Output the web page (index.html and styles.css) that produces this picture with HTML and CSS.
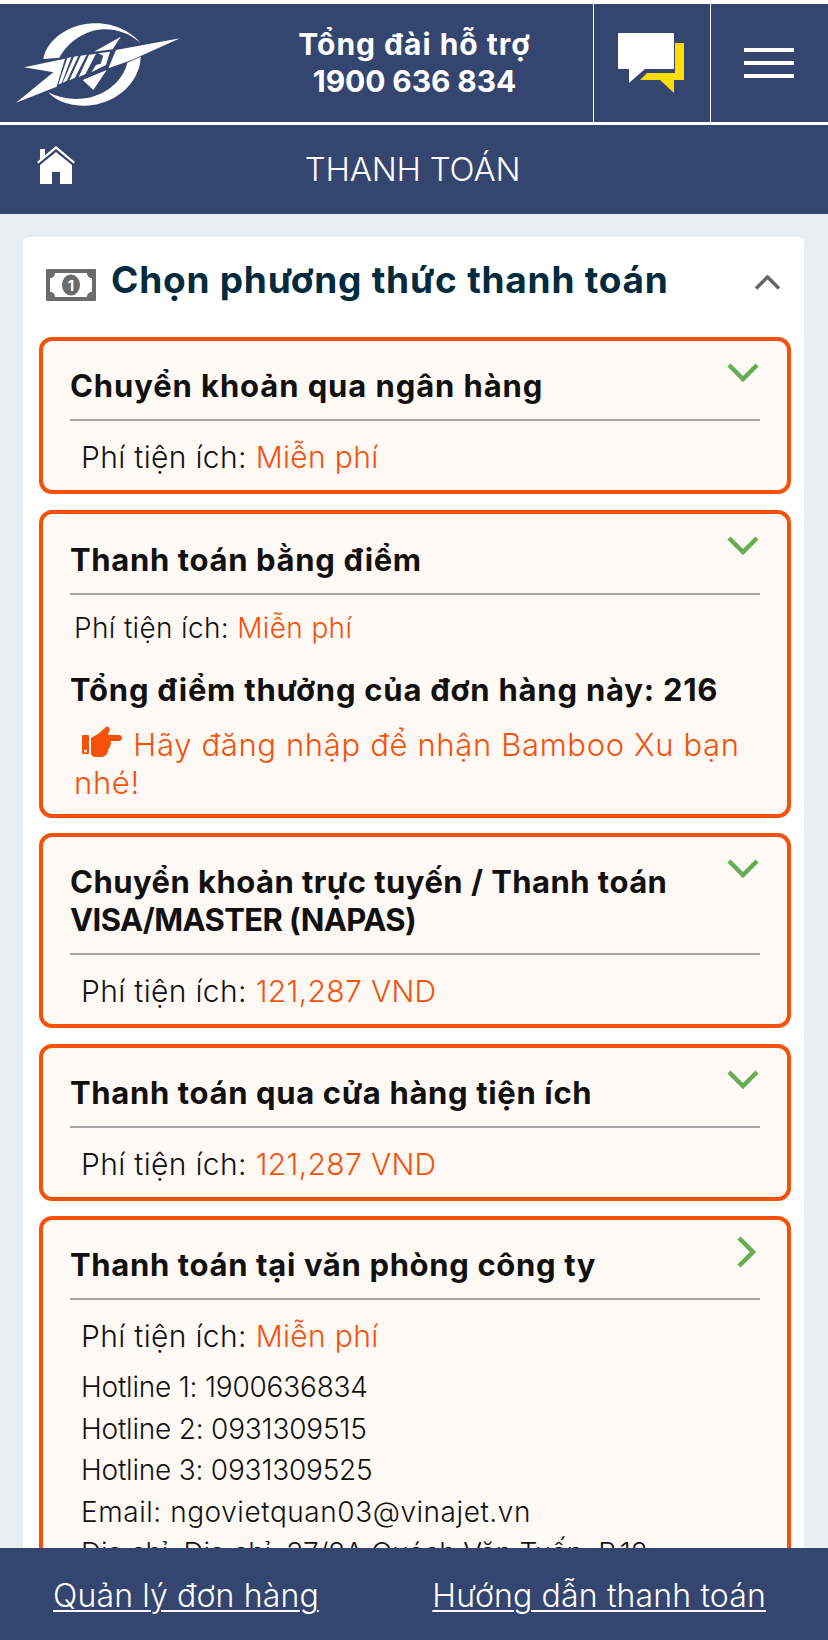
FILE: index.html
```html
<!DOCTYPE html>
<html lang="vi">
<head>
<meta charset="utf-8">
<title>Thanh toán</title>
<link rel="stylesheet" href="styles.css">
</head>
<body>
<header class="topbar">
  <a class="logo" href="#" aria-label="Logo">
    <svg width="180" height="95" viewBox="0 0 540 285">
      <path class="w" d="M100 132C108 85 160 30 250 25 310 22 365 50 392 85 360 55 320 42 280 43 225 46 175 80 148 128z"/>
      <path class="w" d="M352 143 392 125C392 190 330 268 225 272 175 274 135 255 115 232 150 250 190 256 225 250 290 240 340 195 352 143z"/>
      <path class="w" d="M42 157 165 131 140 215 18 263 130 172z"/>
      <path class="w" d="M172 129 184 127 155 205 145 208z"/>
      <path class="w" d="M192 125 205 123 170 198 158 203z"/>
      <path class="w" d="M212 122 230 119 195 188 178 196z"/>
      <path class="w" d="M237 119 258 116 226 178 206 186z"/>
      <path class="w" d="M265 115 300 110 288 150 244 172 258 150 272 146 280 122z"/>
      <path class="w" d="M332 65 252 110 308 103z"/>
      <path class="w" d="M510 70 318 105 295 160 365 135z"/>
      <path class="w" d="M218 195 290 165 250 225z"/>
    </svg>
  </a>
  <div class="hotline">Tổng đài hỗ trợ<br><span class="phone">1900 636 834</span></div>
  <a class="cell chat" href="#" aria-label="Chat">
    <svg width="66" height="60" viewBox="0 0 66 60">
      <path class="yellow" d="M57 10h9v37H56v13L42 47H22l7-7h28z"/>
      <path class="w" d="M1 0h54a1 1 0 0 1 1 1v34a1 1 0 0 1-1 1H27L11 50V36H1a1 1 0 0 1-1-1V1a1 1 0 0 1 1-1z"/>
    </svg>
  </a>
  <a class="cell menu" href="#" aria-label="Menu">
    <span class="burger"><i></i><i></i><i></i></span>
  </a>
</header>
<div class="subbar">
  <a class="home" href="#" aria-label="Trang chủ">
    <svg width="38" height="38" viewBox="0 0 38 38">
      <path class="w" d="M19 0 38 16l-1.500 1.500L19 3 1.500 17.500 0 16l3-2.500V3h5v6.300z"/>
      <path class="w" d="M19 6 35 19v19H23V26h-8v12H3V19z"/>
    </svg>
  </a>
  <h1>THANH TOÁN</h1>
</div>
<main class="page">
  <section class="card">
    <div class="card-head">
      <svg width="50" height="32" viewBox="0 0 50 32">
        <path class="gray" fill-rule="evenodd" d="M1 0h48a1 1 0 0 1 1 1v30a1 1 0 0 1-1 1H1a1 1 0 0 1-1-1V1a1 1 0 0 1 1-1zM9 4c0 3-2 5-5 5v14c3 0 5 2 5 5h32c0-3 2-5 5-5V9c-3 0-5-2-5-5z"/>
        <ellipse class="gray" cx="25" cy="16" rx="9" ry="10.500"/>
        <text class="money" x="25" y="22">1</text>
      </svg>
      <h2>Chọn phương thức thanh toán</h2>
      <svg class="collapse" width="27" height="15" viewBox="0 0 27 15"><path d="M2 13.500 13.500 2 25 13.500"/></svg>
    </div>

    <article class="box">
      <svg class="chev" width="32" height="20" viewBox="0 0 32 20"><path d="M2 2l14 14L30 2"/></svg>
      <h3 class="wide">Chuyển khoản qua ngân hàng</h3>
      <p class="fee">Phí tiện ích: <span class="hl">Miễn phí</span></p>
    </article>

    <article class="box points-box">
      <svg class="chev" width="32" height="20" viewBox="0 0 32 20"><path d="M2 2l14 14L30 2"/></svg>
      <h3>Thanh toán bằng điểm</h3>
      <p class="fee small">Phí tiện ích: <span class="hl">Miễn phí</span></p>
      <p class="points">Tổng điểm thưởng của đơn hàng này: 216</p>
      <p class="note">
        <svg class="hand" width="42" height="32" viewBox="0 0 42 32">
          <path fill-rule="evenodd" d="M1 9h5a1 1 0 0 1 1 1v17a1 1 0 0 1-1 1H1a1 1 0 0 1-1-1V10a1 1 0 0 1 1-1zM3.500 23.500a1.500 1.500 0 1 0 0 3 1.500 1.500 0 0 0 0-3z"/>
          <path d="M9 12l7-4 8-7c3-1 5 2 3 5l-1 3h11c4 0 4 6 0 6h-8c0 3-1 7-3 9 0 4-3 7-7 7h-6c-2 0-4-2-4-3z"/>
        </svg>
        Hãy đăng nhập để nhận Bamboo Xu bạn nhé!
      </p>
    </article>

    <article class="box">
      <svg class="chev" width="32" height="20" viewBox="0 0 32 20"><path d="M2 2l14 14L30 2"/></svg>
      <h3 class="tight">Chuyển khoản trực tuyến / Thanh toán <span class="caps">VISA/MASTER (NAPAS)</span></h3>
      <p class="fee">Phí tiện ích: <span class="hl">121,287 VND</span></p>
    </article>

    <article class="box store-box">
      <svg class="chev" width="32" height="20" viewBox="0 0 32 20"><path d="M2 2l14 14L30 2"/></svg>
      <h3>Thanh toán qua cửa hàng tiện ích</h3>
      <p class="fee">Phí tiện ích: <span class="hl">121,287 VND</span></p>
    </article>

    <article class="box">
      <svg class="chev right" width="20" height="32" viewBox="0 0 20 32"><path d="M2 2l14 14L2 30"/></svg>
      <h3>Thanh toán tại văn phòng công ty</h3>
      <p class="fee">Phí tiện ích: <span class="hl">Miễn phí</span></p>
      <ul class="contacts">
        <li>Hotline 1: 1900636834</li>
        <li>Hotline 2: 0931309515</li>
        <li>Hotline 3: 0931309525</li>
        <li class="email">Email: ngovietquan03@vinajet.vn</li>
        <li>Địa chỉ: Địa chỉ: 37/8A Quách Văn Tuấn, P.12</li>
      </ul>
    </article>
  </section>
</main>
<footer class="footer">
  <a href="#">Quản lý đơn hàng</a>
  <a href="#">Hướng dẫn thanh toán</a>
</footer>
</body>
</html>
```
FILE: styles.css
```css
* { box-sizing: border-box; }
html, body { margin: 0; padding: 0; height: 1640px; overflow: hidden; background: #fff; }
body { font-family: Inter, "Noto Sans", sans-serif; color: #111; padding-top: 4px; }
h1, h2, h3, p, ul { margin: 0; padding: 0; }
a { color: inherit; text-decoration: none; }
svg { display: block; }
.w { fill: #fff; }
.yellow { fill: #ffdd00; }
.gray { fill: #6b6b6b; }

.topbar { display: flex; height: 118px; background: #34466f; color: #fff; }
.logo { width: 236px; flex: none; padding: 11px 0 0 10px; }
.hotline { width: 357px; flex: none; text-align: center; font-size: 30px; line-height: 37px; font-weight: 700; padding-top: 22px; letter-spacing: 1px; }
.phone { letter-spacing: -0.1px; }
.cell { display: flex; align-items: center; justify-content: center; flex: none; border-left: 1px solid #fff; }
.chat { width: 117px; padding-right: 2px; }
.menu { width: 118px; padding-right: 2px; }
.burger { display: flex; flex-direction: column; gap: 9px; width: 50px; }
.burger i { display: block; height: 4px; background: #fff; }

.subbar { position: relative; display: flex; align-items: center; justify-content: center; height: 92px; background: #34466f; border-top: 3px solid #fff; }
.home { position: absolute; left: 37px; top: 21px; }
.subbar h1 { font-size: 33px; font-weight: 300; color: #fff; line-height: 1; letter-spacing: -0.2px; padding-right: 3px; }

.page { background: #e9eff0; padding: 23px 24px 0 23px; height: 1426px; overflow: hidden; }
.card { background: #fff; border-radius: 6px; padding: 0 13px 0 16px; height: 1500px; }
.card-head { position: relative; display: flex; align-items: center; height: 100px; padding: 0 0 4px 7px; }
.card-head h2 { margin: -10px 0 0 15px; font-size: 37px; line-height: 44px; font-weight: 700; color: #022b3d; white-space: nowrap; letter-spacing: 0.77px; }
.money { fill: #fff; font-size: 15px; font-weight: 700; text-anchor: middle; }
.collapse { position: absolute; right: 10px; top: 38px; }
.collapse path { fill: none; stroke: #666; stroke-width: 3.500; }

.box { position: relative; background: #fff9f5; border: 4px solid #f4510b; border-radius: 13px; padding: 26px 27px 13px; margin-bottom: 16px; }
.points-box, .store-box { margin-bottom: 15px; }
.box h3 { font-size: 31px; line-height: 38px; font-weight: 700; color: #111; padding-bottom: 14px; border-bottom: 2px solid #a5a5a5; letter-spacing: 0.65px; }
.box h3.wide { letter-spacing: 0.9px; }
.box h3.tight { letter-spacing: 0.46px; }
.box .caps { letter-spacing: -0.6px; }
.points-box h3 { padding-top: 1px; }
.chev { position: absolute; right: 28px; top: 22px; }
.chev path { fill: none; stroke: #66ad56; stroke-width: 4.500; }
.chev.right { right: 30px; top: 16px; }
.fee { font-size: 30px; line-height: 40px; font-weight: 300; padding: 16px 0 0 11px; letter-spacing: 0.35px; }
.fee.small { font-size: 28px; padding: 13px 0 0 4px; }
.hl { color: #f4510b; }
.points { font-size: 31px; line-height: 38px; font-weight: 700; padding-top: 23px; letter-spacing: 0.77px; }
.note { font-size: 31px; line-height: 37.500px; font-weight: 300; color: #f4510b; padding: 17px 0 0 4px; letter-spacing: 0.65px; }
.hand { display: inline-block; vertical-align: -2px; margin-left: 8px; }
.hand path { fill: #f4510b; }
.contacts { list-style: none; font-size: 28px; line-height: 41.500px; font-weight: 300; padding: 11px 0 0 11px; letter-spacing: -0.2px; }
.email { letter-spacing: 0.55px; white-space: nowrap; }

.footer { position: fixed; left: 0; right: 0; bottom: 0; height: 92px; display: flex; align-items: center; justify-content: space-between; padding: 3px 62px 0 53px; background: #34466f; color: #fff; font-size: 32px; font-weight: 300; letter-spacing: 0.15px; }
.footer a { text-decoration: underline; text-decoration-thickness: 2px; text-underline-offset: 3px; }
```
